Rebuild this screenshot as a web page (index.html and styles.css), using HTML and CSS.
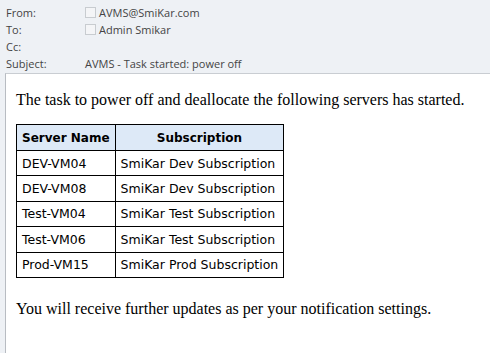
FILE: index.html
```html
<!DOCTYPE html>
<html>
<head>
<meta charset="utf-8">
<link rel="stylesheet" href="styles.css">
</head>
<body>
<div class="header">
  <div class="row"><span class="label">From:</span><span class="value"><span class="box"></span>AVMS@SmiKar.com</span></div>
  <div class="row"><span class="label">To:</span><span class="value"><span class="box"></span>Admin Smikar</span></div>
  <div class="row"><span class="label">Cc:</span><span class="value"></span></div>
  <div class="row"><span class="label">Subject:</span><span class="value">AVMS - Task started: power off</span></div>
</div>
<div class="content">
  <p class="msg">The task to power off and deallocate the following servers has started.</p>
  <table class="servers">
    <tr><th>Server Name</th><th>Subscription</th></tr>
    <tr><td>DEV-VM04</td><td>SmiKar Dev Subscription</td></tr>
    <tr><td>DEV-VM08</td><td>SmiKar Dev Subscription</td></tr>
    <tr><td>Test-VM04</td><td>SmiKar Test Subscription</td></tr>
    <tr><td>Test-VM06</td><td>SmiKar Test Subscription</td></tr>
    <tr><td>Prod-VM15</td><td>SmiKar Prod Subscription</td></tr>
  </table>
  <p class="msg">You will receive further updates as per your notification settings.</p>
</div>
</body>
</html>
```
FILE: styles.css
```css
html, body {
  margin: 0;
  padding: 0;
  height: 100%;
}
body {
  background: #eef1f5;
  display: flex;
  flex-direction: column;
  overflow: hidden;
}
.header {
  padding: 4px 0 0 6px;
  font-family: "Open Sans", "Noto Sans", sans-serif;
  font-size: 11px;
  color: #444;
}
.row {
  display: flex;
  height: 17px;
  align-items: center;
}
.label {
  width: 79px;
}
.value {
  display: flex;
  align-items: center;
}
.box {
  width: 9px;
  height: 9px;
  border: 1px solid #c8ccd0;
  background: #f4f5f7;
  margin-right: 3px;
}
.content {
  flex: 1;
  margin: 1px 0 0 5px;
  background: #fff;
  border-top: 1px solid #c9cdd2;
  border-left: 1px solid #b8bcc2;
  padding: 17px 0 0 10px;
}
.msg {
  margin: 0;
  font-family: "Liberation Serif", serif;
  font-size: 16px;
  color: #000;
}
.servers {
  border-collapse: collapse;
  margin: 15px 0 22px 0;
  font-family: "DejaVu Sans", Verdana, sans-serif;
  font-size: 12.5px;
}
.servers th, .servers td {
  border: 1px solid #000;
  height: 24.4px;
  padding: 0 5px;
  text-align: left;
  white-space: nowrap;
}
.servers th {
  height: 25px;
  font-size: 12px;
  background: #dde9f7;
  text-align: center;
  font-weight: bold;
}
```
